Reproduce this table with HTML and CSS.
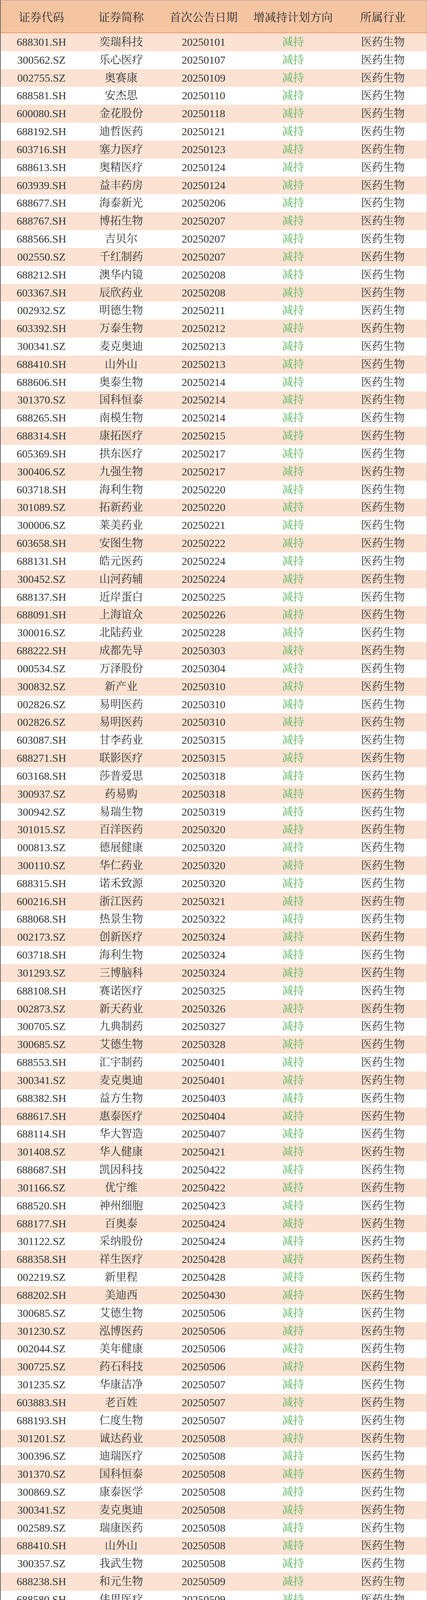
FILE: index.html
```html
<!DOCTYPE html>
<html lang="zh-CN">
<head>
<meta charset="utf-8">
<title>医药生物 减持计划</title>
<link rel="stylesheet" href="styles.css">
</head>
<body>
<div class="sheet">
  <div class="head">
    <span>证券代码</span><span>证券简称</span><span>首次公告日期</span><span>增减持计划方向</span><span>所属行业</span>
  </div>
  <div class="body">
    <div class="row"><span>688301.SH</span><span>奕瑞科技</span><span>20250101</span><span class="dir">减持</span><span>医药生物</span></div>
    <div class="row"><span>300562.SZ</span><span>乐心医疗</span><span>20250107</span><span class="dir">减持</span><span>医药生物</span></div>
    <div class="row"><span>002755.SZ</span><span>奥赛康</span><span>20250109</span><span class="dir">减持</span><span>医药生物</span></div>
    <div class="row"><span>688581.SH</span><span>安杰思</span><span>20250110</span><span class="dir">减持</span><span>医药生物</span></div>
    <div class="row"><span>600080.SH</span><span>金花股份</span><span>20250118</span><span class="dir">减持</span><span>医药生物</span></div>
    <div class="row"><span>688192.SH</span><span>迪哲医药</span><span>20250121</span><span class="dir">减持</span><span>医药生物</span></div>
    <div class="row"><span>603716.SH</span><span>塞力医疗</span><span>20250123</span><span class="dir">减持</span><span>医药生物</span></div>
    <div class="row"><span>688613.SH</span><span>奥精医疗</span><span>20250124</span><span class="dir">减持</span><span>医药生物</span></div>
    <div class="row"><span>603939.SH</span><span>益丰药房</span><span>20250124</span><span class="dir">减持</span><span>医药生物</span></div>
    <div class="row"><span>688677.SH</span><span>海泰新光</span><span>20250206</span><span class="dir">减持</span><span>医药生物</span></div>
    <div class="row"><span>688767.SH</span><span>博拓生物</span><span>20250207</span><span class="dir">减持</span><span>医药生物</span></div>
    <div class="row"><span>688566.SH</span><span>吉贝尔</span><span>20250207</span><span class="dir">减持</span><span>医药生物</span></div>
    <div class="row"><span>002550.SZ</span><span>千红制药</span><span>20250207</span><span class="dir">减持</span><span>医药生物</span></div>
    <div class="row"><span>688212.SH</span><span>澳华内镜</span><span>20250208</span><span class="dir">减持</span><span>医药生物</span></div>
    <div class="row"><span>603367.SH</span><span>辰欣药业</span><span>20250208</span><span class="dir">减持</span><span>医药生物</span></div>
    <div class="row"><span>002932.SZ</span><span>明德生物</span><span>20250211</span><span class="dir">减持</span><span>医药生物</span></div>
    <div class="row"><span>603392.SH</span><span>万泰生物</span><span>20250212</span><span class="dir">减持</span><span>医药生物</span></div>
    <div class="row"><span>300341.SZ</span><span>麦克奥迪</span><span>20250213</span><span class="dir">减持</span><span>医药生物</span></div>
    <div class="row"><span>688410.SH</span><span>山外山</span><span>20250213</span><span class="dir">减持</span><span>医药生物</span></div>
    <div class="row"><span>688606.SH</span><span>奥泰生物</span><span>20250214</span><span class="dir">减持</span><span>医药生物</span></div>
    <div class="row"><span>301370.SZ</span><span>国科恒泰</span><span>20250214</span><span class="dir">减持</span><span>医药生物</span></div>
    <div class="row"><span>688265.SH</span><span>南模生物</span><span>20250214</span><span class="dir">减持</span><span>医药生物</span></div>
    <div class="row"><span>688314.SH</span><span>康拓医疗</span><span>20250215</span><span class="dir">减持</span><span>医药生物</span></div>
    <div class="row"><span>605369.SH</span><span>拱东医疗</span><span>20250217</span><span class="dir">减持</span><span>医药生物</span></div>
    <div class="row"><span>300406.SZ</span><span>九强生物</span><span>20250217</span><span class="dir">减持</span><span>医药生物</span></div>
    <div class="row"><span>603718.SH</span><span>海利生物</span><span>20250220</span><span class="dir">减持</span><span>医药生物</span></div>
    <div class="row"><span>301089.SZ</span><span>拓新药业</span><span>20250220</span><span class="dir">减持</span><span>医药生物</span></div>
    <div class="row"><span>300006.SZ</span><span>莱美药业</span><span>20250221</span><span class="dir">减持</span><span>医药生物</span></div>
    <div class="row"><span>603658.SH</span><span>安图生物</span><span>20250222</span><span class="dir">减持</span><span>医药生物</span></div>
    <div class="row"><span>688131.SH</span><span>皓元医药</span><span>20250224</span><span class="dir">减持</span><span>医药生物</span></div>
    <div class="row"><span>300452.SZ</span><span>山河药辅</span><span>20250224</span><span class="dir">减持</span><span>医药生物</span></div>
    <div class="row"><span>688137.SH</span><span>近岸蛋白</span><span>20250225</span><span class="dir">减持</span><span>医药生物</span></div>
    <div class="row"><span>688091.SH</span><span>上海谊众</span><span>20250226</span><span class="dir">减持</span><span>医药生物</span></div>
    <div class="row"><span>300016.SZ</span><span>北陆药业</span><span>20250228</span><span class="dir">减持</span><span>医药生物</span></div>
    <div class="row"><span>688222.SH</span><span>成都先导</span><span>20250303</span><span class="dir">减持</span><span>医药生物</span></div>
    <div class="row"><span>000534.SZ</span><span>万泽股份</span><span>20250304</span><span class="dir">减持</span><span>医药生物</span></div>
    <div class="row"><span>300832.SZ</span><span>新产业</span><span>20250310</span><span class="dir">减持</span><span>医药生物</span></div>
    <div class="row"><span>002826.SZ</span><span>易明医药</span><span>20250310</span><span class="dir">减持</span><span>医药生物</span></div>
    <div class="row"><span>002826.SZ</span><span>易明医药</span><span>20250310</span><span class="dir">减持</span><span>医药生物</span></div>
    <div class="row"><span>603087.SH</span><span>甘李药业</span><span>20250315</span><span class="dir">减持</span><span>医药生物</span></div>
    <div class="row"><span>688271.SH</span><span>联影医疗</span><span>20250315</span><span class="dir">减持</span><span>医药生物</span></div>
    <div class="row"><span>603168.SH</span><span>莎普爱思</span><span>20250318</span><span class="dir">减持</span><span>医药生物</span></div>
    <div class="row"><span>300937.SZ</span><span>药易购</span><span>20250318</span><span class="dir">减持</span><span>医药生物</span></div>
    <div class="row"><span>300942.SZ</span><span>易瑞生物</span><span>20250319</span><span class="dir">减持</span><span>医药生物</span></div>
    <div class="row"><span>301015.SZ</span><span>百洋医药</span><span>20250320</span><span class="dir">减持</span><span>医药生物</span></div>
    <div class="row"><span>000813.SZ</span><span>德展健康</span><span>20250320</span><span class="dir">减持</span><span>医药生物</span></div>
    <div class="row"><span>300110.SZ</span><span>华仁药业</span><span>20250320</span><span class="dir">减持</span><span>医药生物</span></div>
    <div class="row"><span>688315.SH</span><span>诺禾致源</span><span>20250320</span><span class="dir">减持</span><span>医药生物</span></div>
    <div class="row"><span>600216.SH</span><span>浙江医药</span><span>20250321</span><span class="dir">减持</span><span>医药生物</span></div>
    <div class="row"><span>688068.SH</span><span>热景生物</span><span>20250322</span><span class="dir">减持</span><span>医药生物</span></div>
    <div class="row"><span>002173.SZ</span><span>创新医疗</span><span>20250324</span><span class="dir">减持</span><span>医药生物</span></div>
    <div class="row"><span>603718.SH</span><span>海利生物</span><span>20250324</span><span class="dir">减持</span><span>医药生物</span></div>
    <div class="row"><span>301293.SZ</span><span>三博脑科</span><span>20250324</span><span class="dir">减持</span><span>医药生物</span></div>
    <div class="row"><span>688108.SH</span><span>赛诺医疗</span><span>20250325</span><span class="dir">减持</span><span>医药生物</span></div>
    <div class="row"><span>002873.SZ</span><span>新天药业</span><span>20250326</span><span class="dir">减持</span><span>医药生物</span></div>
    <div class="row"><span>300705.SZ</span><span>九典制药</span><span>20250327</span><span class="dir">减持</span><span>医药生物</span></div>
    <div class="row"><span>300685.SZ</span><span>艾德生物</span><span>20250328</span><span class="dir">减持</span><span>医药生物</span></div>
    <div class="row"><span>688553.SH</span><span>汇宇制药</span><span>20250401</span><span class="dir">减持</span><span>医药生物</span></div>
    <div class="row"><span>300341.SZ</span><span>麦克奥迪</span><span>20250401</span><span class="dir">减持</span><span>医药生物</span></div>
    <div class="row"><span>688382.SH</span><span>益方生物</span><span>20250403</span><span class="dir">减持</span><span>医药生物</span></div>
    <div class="row"><span>688617.SH</span><span>惠泰医疗</span><span>20250404</span><span class="dir">减持</span><span>医药生物</span></div>
    <div class="row"><span>688114.SH</span><span>华大智造</span><span>20250407</span><span class="dir">减持</span><span>医药生物</span></div>
    <div class="row"><span>301408.SZ</span><span>华人健康</span><span>20250421</span><span class="dir">减持</span><span>医药生物</span></div>
    <div class="row"><span>688687.SH</span><span>凯因科技</span><span>20250422</span><span class="dir">减持</span><span>医药生物</span></div>
    <div class="row"><span>301166.SZ</span><span>优宁维</span><span>20250422</span><span class="dir">减持</span><span>医药生物</span></div>
    <div class="row"><span>688520.SH</span><span>神州细胞</span><span>20250423</span><span class="dir">减持</span><span>医药生物</span></div>
    <div class="row"><span>688177.SH</span><span>百奥泰</span><span>20250424</span><span class="dir">减持</span><span>医药生物</span></div>
    <div class="row"><span>301122.SZ</span><span>采纳股份</span><span>20250424</span><span class="dir">减持</span><span>医药生物</span></div>
    <div class="row"><span>688358.SH</span><span>祥生医疗</span><span>20250428</span><span class="dir">减持</span><span>医药生物</span></div>
    <div class="row"><span>002219.SZ</span><span>新里程</span><span>20250428</span><span class="dir">减持</span><span>医药生物</span></div>
    <div class="row"><span>688202.SH</span><span>美迪西</span><span>20250430</span><span class="dir">减持</span><span>医药生物</span></div>
    <div class="row"><span>300685.SZ</span><span>艾德生物</span><span>20250506</span><span class="dir">减持</span><span>医药生物</span></div>
    <div class="row"><span>301230.SZ</span><span>泓博医药</span><span>20250506</span><span class="dir">减持</span><span>医药生物</span></div>
    <div class="row"><span>002044.SZ</span><span>美年健康</span><span>20250506</span><span class="dir">减持</span><span>医药生物</span></div>
    <div class="row"><span>300725.SZ</span><span>药石科技</span><span>20250506</span><span class="dir">减持</span><span>医药生物</span></div>
    <div class="row"><span>301235.SZ</span><span>华康洁净</span><span>20250507</span><span class="dir">减持</span><span>医药生物</span></div>
    <div class="row"><span>603883.SH</span><span>老百姓</span><span>20250507</span><span class="dir">减持</span><span>医药生物</span></div>
    <div class="row"><span>688193.SH</span><span>仁度生物</span><span>20250507</span><span class="dir">减持</span><span>医药生物</span></div>
    <div class="row"><span>301201.SZ</span><span>诚达药业</span><span>20250508</span><span class="dir">减持</span><span>医药生物</span></div>
    <div class="row"><span>300396.SZ</span><span>迪瑞医疗</span><span>20250508</span><span class="dir">减持</span><span>医药生物</span></div>
    <div class="row"><span>301370.SZ</span><span>国科恒泰</span><span>20250508</span><span class="dir">减持</span><span>医药生物</span></div>
    <div class="row"><span>300869.SZ</span><span>康泰医学</span><span>20250508</span><span class="dir">减持</span><span>医药生物</span></div>
    <div class="row"><span>300341.SZ</span><span>麦克奥迪</span><span>20250508</span><span class="dir">减持</span><span>医药生物</span></div>
    <div class="row"><span>002589.SZ</span><span>瑞康医药</span><span>20250508</span><span class="dir">减持</span><span>医药生物</span></div>
    <div class="row"><span>688410.SH</span><span>山外山</span><span>20250508</span><span class="dir">减持</span><span>医药生物</span></div>
    <div class="row"><span>300357.SZ</span><span>我武生物</span><span>20250508</span><span class="dir">减持</span><span>医药生物</span></div>
    <div class="row"><span>688238.SH</span><span>和元生物</span><span>20250509</span><span class="dir">减持</span><span>医药生物</span></div>
    <div class="row"><span>688580.SH</span><span>伟思医疗</span><span>20250509</span><span class="dir">减持</span><span>医药生物</span></div>
    <div class="row"><span>002086.SZ</span><span>东方海洋</span><span>20250512</span><span class="dir">减持</span><span>医药生物</span></div>
    <div class="row"><span>301093.SZ</span><span>华兰股份</span><span>20250512</span><span class="dir">减持</span><span>医药生物</span></div>
    <div class="row"><span>688553.SH</span><span>汇宇制药</span><span>20250512</span><span class="dir">减持</span><span>医药生物</span></div>
    <div class="row"><span>000566.SZ</span><span>海南海药</span><span>20250513</span><span class="dir">减持</span><span>医药生物</span></div>
    <div class="row"><span>688690.SH</span><span>纳微科技</span><span>20250513</span><span class="dir">减持</span><span>医药生物</span></div>
    <div class="row"><span>301126.SZ</span><span>达嘉维康</span><span>20250514</span><span class="dir">减持</span><span>医药生物</span></div>
    <div class="row"><span>688302.SH</span><span>海创药业</span><span>20250514</span><span class="dir">减持</span><span>医药生物</span></div>
    <div class="row"><span>002907.SZ</span><span>华森制药</span><span>20250514</span><span class="dir">减持</span><span>医药生物</span></div>
    <div class="row"><span>002566.SZ</span><span>益盛药业</span><span>20250514</span><span class="dir">减持</span><span>医药生物</span></div>
    <div class="row"><span>603387.SH</span><span>基蛋生物</span><span>20250515</span><span class="dir">减持</span><span>医药生物</span></div>
    <div class="row"><span>301509.SZ</span><span>金凯生科</span><span>20250515</span><span class="dir">减持</span><span>医药生物</span></div>
    <div class="row"><span>300406.SZ</span><span>九强生物</span><span>20250516</span><span class="dir">减持</span><span>医药生物</span></div>
    <div class="row"><span>300759.SZ</span><span>康龙化成</span><span>20250516</span><span class="dir">减持</span><span>医药生物</span></div>
    <div class="row"><span>000710.SZ</span><span>贝瑞基因</span><span>20250517</span><span class="dir">减持</span><span>医药生物</span></div>
    <div class="row"><span>688192.SH</span><span>迪哲医药</span><span>20250520</span><span class="dir">减持</span><span>医药生物</span></div>
    <div class="row"><span>600613.SH</span><span>神奇制药</span><span>20250520</span><span class="dir">减持</span><span>医药生物</span></div>
    <div class="row"><span>688085.SH</span><span>三友医疗</span><span>20250521</span><span class="dir">减持</span><span>医药生物</span></div>
    <div class="row"><span>688091.SH</span><span>上海谊众</span><span>20250521</span><span class="dir">减持</span><span>医药生物</span></div>
    <div class="row"><span>688277.SH</span><span>天智航</span><span>20250521</span><span class="dir">减持</span><span>医药生物</span></div>
    <div class="row"><span>688277.SH</span><span>天智航</span><span>20250521</span><span class="dir">减持</span><span>医药生物</span></div>
    <div class="row"><span>002166.SZ</span><span>莱茵生物</span><span>20250522</span><span class="dir">减持</span><span>医药生物</span></div>
    <div class="row"><span>300937.SZ</span><span>药易购</span><span>20250522</span><span class="dir">减持</span><span>医药生物</span></div>
    <div class="row"><span>688212.SH</span><span>澳华内镜</span><span>20250523</span><span class="dir">减持</span><span>医药生物</span></div>
    <div class="row"><span>301130.SZ</span><span>西点药业</span><span>20250523</span><span class="dir">减持</span><span>医药生物</span></div>
    <div class="row"><span>300519.SZ</span><span>新光药业</span><span>20250523</span><span class="dir">减持</span><span>医药生物</span></div>
    <div class="row"><span>301281.SZ</span><span>科源制药</span><span>20250526</span><span class="dir">减持</span><span>医药生物</span></div>
    <div class="row"><span>688393.SH</span><span>安必平</span><span>20250527</span><span class="dir">减持</span><span>医药生物</span></div>
    <div class="row"><span>301017.SZ</span><span>漱玉平民</span><span>20250527</span><span class="dir">减持</span><span>医药生物</span></div>
    <div class="row"><span>001367.SZ</span><span>海森药业</span><span>20250530</span><span class="dir">减持</span><span>医药生物</span></div>
    <div class="row"><span>002817.SZ</span><span>黄山胶囊</span><span>20250530</span><span class="dir">减持</span><span>医药生物</span></div>
    <div class="row"><span>002437.SZ</span><span>誉衡药业</span><span>20250530</span><span class="dir">减持</span><span>医药生物</span></div>
    <div class="row"><span>300110.SZ</span><span>华仁药业</span><span>20250603</span><span class="dir">减持</span><span>医药生物</span></div>
    <div class="row"><span>300642.SZ</span><span>透景生命</span><span>20250603</span><span class="dir">减持</span><span>医药生物</span></div>
    <div class="row"><span>688050.SH</span><span>爱博医疗</span><span>20250604</span><span class="dir">减持</span><span>医药生物</span></div>
    <div class="row"><span>301509.SZ</span><span>金凯生科</span><span>20250604</span><span class="dir">减持</span><span>医药生物</span></div>
    <div class="row"><span>603233.SH</span><span>大参林</span><span>20250605</span><span class="dir">减持</span><span>医药生物</span></div>
    <div class="row"><span>688136.SH</span><span>科兴制药</span><span>20250605</span><span class="dir">减持</span><span>医药生物</span></div>
    <div class="row"><span>003020.SZ</span><span>立方制药</span><span>20250606</span><span class="dir">减持</span><span>医药生物</span></div>
    <div class="row"><span>688338.SH</span><span>赛科希德</span><span>20250606</span><span class="dir">减持</span><span>医药生物</span></div>
    <div class="row"><span>688026.SH</span><span>洁特生物</span><span>20250610</span><span class="dir">减持</span><span>医药生物</span></div>
    <div class="row"><span>300683.SZ</span><span>海特生物</span><span>20250611</span><span class="dir">减持</span><span>医药生物</span></div>
    <div class="row"><span>603439.SH</span><span>贵州三力</span><span>20250612</span><span class="dir">减持</span><span>医药生物</span></div>
    <div class="row"><span>002900.SZ</span><span>哈三联</span><span>20250613</span><span class="dir">减持</span><span>医药生物</span></div>
    <div class="row"><span>002793.SZ</span><span>罗欣药业</span><span>20250613</span><span class="dir">减持</span><span>医药生物</span></div>
    <div class="row"><span>603939.SH</span><span>益丰药房</span><span>20250613</span><span class="dir">减持</span><span>医药生物</span></div>
    <div class="row"><span>600276.SH</span><span>恒瑞医药</span><span>20250616</span><span class="dir">减持</span><span>医药生物</span></div>
    <div class="row row-cut"><em class="mark">头条 @刘志</em></div>
  </div>
</div>
</body>
</html>
```

FILE: styles.css
```css
html, body {
  margin: 0;
  padding: 0;
  background: #ffffff;
}

.sheet {
  width: 1093px;
  height: 6246px;
  overflow: hidden;
  box-sizing: border-box;
  border-left: 2px solid #6e6e6e;
  border-top: 1px solid #9a9a9a;
  border-right: 1px solid #b5b5b5;
  font-family: "Liberation Serif", "Noto Serif CJK SC", "Noto Sans CJK SC", serif;
  color: #363636;
  font-size: 28px;
}

.head,
.row {
  display: grid;
  grid-template-columns: 208px 200px 222px 236px 1fr;
  align-items: center;
  justify-items: center;
}

.head {
  height: 82px;
  background: #f5c4a1;
  border-bottom: 2px solid #eb9c6e;
  color: #303030;
  font-size: 29px;
}

.row {
  height: 45.83px;
  line-height: 1;
}

.row:nth-child(odd) {
  background: #fbe2d2;
}

.row:nth-child(even) {
  background: #ffffff;
}

.dir {
  color: #5db862;
}

.row-cut {
  display: flex;
  justify-content: flex-end;
  align-items: flex-end;
  height: 20px;
  padding-right: 44px;
}

.mark {
  font-style: normal;
  font-size: 22px;
  line-height: 20px;
  color: #4a4a4a;
  font-family: "Noto Sans CJK SC", sans-serif;
}
```
